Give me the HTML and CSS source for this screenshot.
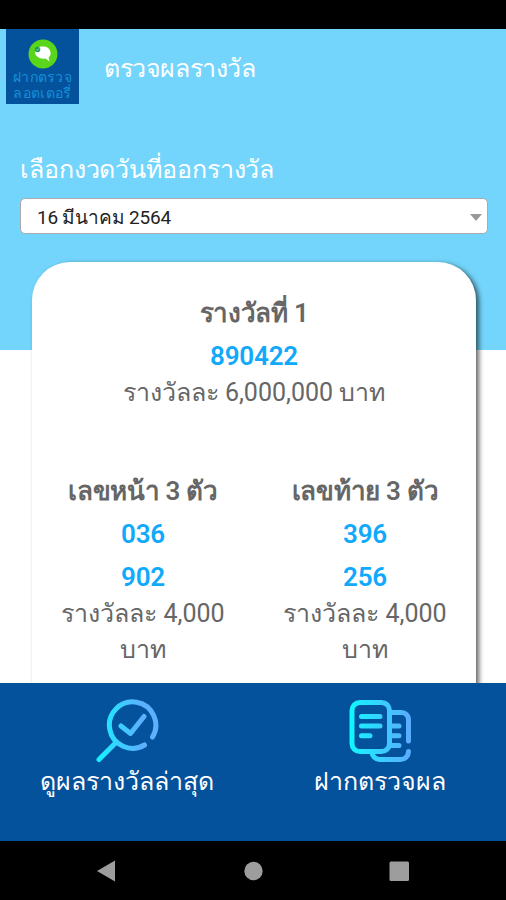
FILE: index.html
```html
<!DOCTYPE html>
<html lang="th">
<head>
<meta charset="utf-8">
<meta name="viewport" content="width=device-width, initial-scale=1">
<title>ตรวจผลรางวัล</title>
<link rel="stylesheet" href="styles.css">
</head>
<body>
<div class="status-bar"></div>
<main class="screen">
  <div class="hero">
    <header class="header">
      <div class="logo">
        <svg width="30" height="30" viewBox="0 0 30 30">
          <circle cx="15" cy="15" r="14.500" fill="#59d51b"/>
          <path d="M7 13c1-4 4.500-6 9-5.500 4.500.5 7 3.500 6.600 7.500-.2 1.500-.9 2.600-2 3.400l1 4.100-4.200-3C12 20.500 7 17.500 7 13z" fill="#fff"/>
          <circle cx="9.500" cy="10.500" r="2.800" fill="#239b5a"/>
          <path d="M8.200 10.500l1 1 1.800-2" stroke="#b9e9c4" stroke-width=".8" fill="none"/>
        </svg>
        <span class="logo-text">ฝากตรวจ</span>
        <span class="logo-text">ลอตเตอรี่</span>
      </div>
      <h1>ตรวจผลรางวัล</h1>
    </header>
    <div class="draw">
      <p class="draw-label">เลือกงวดวันที่ออกรางวัล</p>
      <div class="select"><span>16 มีนาคม 2564</span><i class="caret"></i></div>
    </div>
  </div>
  <section class="card">
    <div class="prize first">
      <h2>รางวัลที่ 1</h2>
      <b>890422</b>
      <p>รางวัลละ 6,000,000 บาท</p>
    </div>
    <div class="row">
      <div class="prize">
        <h2>เลขหน้า 3 ตัว</h2>
        <b>036</b>
        <b>902</b>
        <p>รางวัลละ 4,000<br>บาท</p>
      </div>
      <div class="prize">
        <h2>เลขท้าย 3 ตัว</h2>
        <b>396</b>
        <b>256</b>
        <p>รางวัลละ 4,000<br>บาท</p>
      </div>
    </div>
  </section>
</main>
<nav class="tabs">
  <a class="tab">
    <svg width="64" height="64" viewBox="0 0 64 64" fill="none" stroke="url(#g1)" stroke-width="5" stroke-linecap="round" stroke-linejoin="round">
      <defs><linearGradient id="g1" gradientUnits="userSpaceOnUse" x1="4" y1="0" x2="46" y2="0"><stop offset="0" stop-color="#18efff"/><stop offset="1" stop-color="#5bb0ff"/></linearGradient></defs>
      <path d="M57.500 38A23.200 23.200 0 1 0 49.500 46M21 43.500L4 60.500M26 27l9.500 7.500L49 17.500"/>
    </svg>
    <span>ดูผลรางวัลล่าสุด</span>
  </a>
  <a class="tab">
    <svg class="papers" width="64" height="64" viewBox="0 0 64 64" fill="none" stroke="url(#g2)" stroke-width="5" stroke-linecap="round" stroke-linejoin="round">
      <defs><linearGradient id="g2" gradientUnits="userSpaceOnUse" x1="2" y1="0" x2="60" y2="0"><stop offset="0" stop-color="#12f5ff"/><stop offset="1" stop-color="#5bacff"/></linearGradient></defs>
      <rect x="3" y="3.500" width="37.500" height="49" rx="8"/>
      <path d="M42 13.500h10.500a7 7 0 0 1 7 7V42M59.500 52.500a8 8 0 0 1-8 8H30.500a8 8 0 0 1-7.500-7.500M12.500 17.500H31M12.500 27H31M12.500 36.700H21M42 27h8M42 36.700h8M42 46.500h8"/>
    </svg>
    <span>ฝากตรวจผล</span>
  </a>
</nav>
<div class="android-nav">
  <svg width="506" height="59" viewBox="0 0 506 59" fill="#9d9d9d">
    <path d="M97 30L115 19.500V40.500Z"/>
    <circle cx="253.500" cy="30" r="9.200"/>
    <rect x="389.500" y="20.500" width="19.500" height="19.500" rx="1.500"/>
  </svg>
</div>
</body>
</html>
```
FILE: styles.css
```css
* {
  box-sizing: border-box;
}
body {
  margin: 0;
  height: 900px;
  display: flex;
  flex-direction: column;
  overflow: hidden;
  background: #fff;
  font-family: Roboto, "Noto Sans", sans-serif;
}
h1, h2, p {
  margin: 0;
}
.status-bar {
  height: 29px;
  flex: none;
  background: #000;
}
.screen {
  height: 654px;
  flex: none;
  overflow: hidden;
}
.hero {
  height: 321px;
  background: #73d5fb;
  color: #fff;
}
.header {
  display: flex;
  padding-left: 6px;
}
.logo {
  width: 73px;
  height: 75px;
  padding-top: 10px;
  background: #04529c;
  display: flex;
  flex-direction: column;
  align-items: center;
}
.logo svg {
  flex: none;
}
.logo-text {
  color: #168fd8;
  font-size: 14px;
  line-height: 16px;
  letter-spacing: 0.3px;
  white-space: nowrap;
}
h1 {
  margin-left: 25px;
  font-size: 25px;
  font-weight: 400;
  line-height: 80px;
  letter-spacing: -0.4px;
  white-space: nowrap;
}
.draw {
  padding: 41px 18px 0 20px;
}
.draw-label {
  font-size: 25px;
  line-height: 40px;
  height: 48px;
  letter-spacing: -0.1px;
  white-space: nowrap;
}
.select {
  height: 36px;
  padding: 2px 5px 0 16px;
  display: flex;
  align-items: center;
  justify-content: space-between;
  border: 1px solid #aaa;
  border-radius: 5px;
  background: #fff;
  color: #222;
  font-size: 19px;
  letter-spacing: -0.2px;
}
.caret {
  border: 6px solid transparent;
  border-top: 7px solid #999;
  border-bottom: 0;
}
.card {
  width: 444px;
  height: 520px;
  margin: -88px 0 0 32px;
  padding-top: 30px;
  position: relative;
  background: #fff;
  border-radius: 38px;
  box-shadow: 3px 2px 5px rgba(0, 0, 0, 0.6);
}
.row {
  display: flex;
}
.prize {
  flex: 1;
  text-align: center;
  color: #666;
}
.first {
  height: 178px;
}
.prize h2 {
  font-size: 26px;
  font-weight: 600;
  line-height: 43px;
  letter-spacing: -0.3px;
}
.prize b {
  display: block;
  color: #10a9fb;
  font-size: 26px;
  font-weight: 600;
  line-height: 43px;
  letter-spacing: -0.2px;
}
.prize p {
  font-size: 25px;
  line-height: 36px;
  margin-top: -3px;
}
.tabs {
  height: 158px;
  flex: none;
  display: flex;
  background: #04529c;
}
.tab {
  flex: 1;
  padding-top: 16px;
  display: flex;
  flex-direction: column;
  align-items: center;
  color: #fff;
  font-size: 25px;
  line-height: 38px;
}
.papers {
  margin-left: 3px;
}
.android-nav {
  height: 59px;
  flex: none;
  background: #000;
}
```
